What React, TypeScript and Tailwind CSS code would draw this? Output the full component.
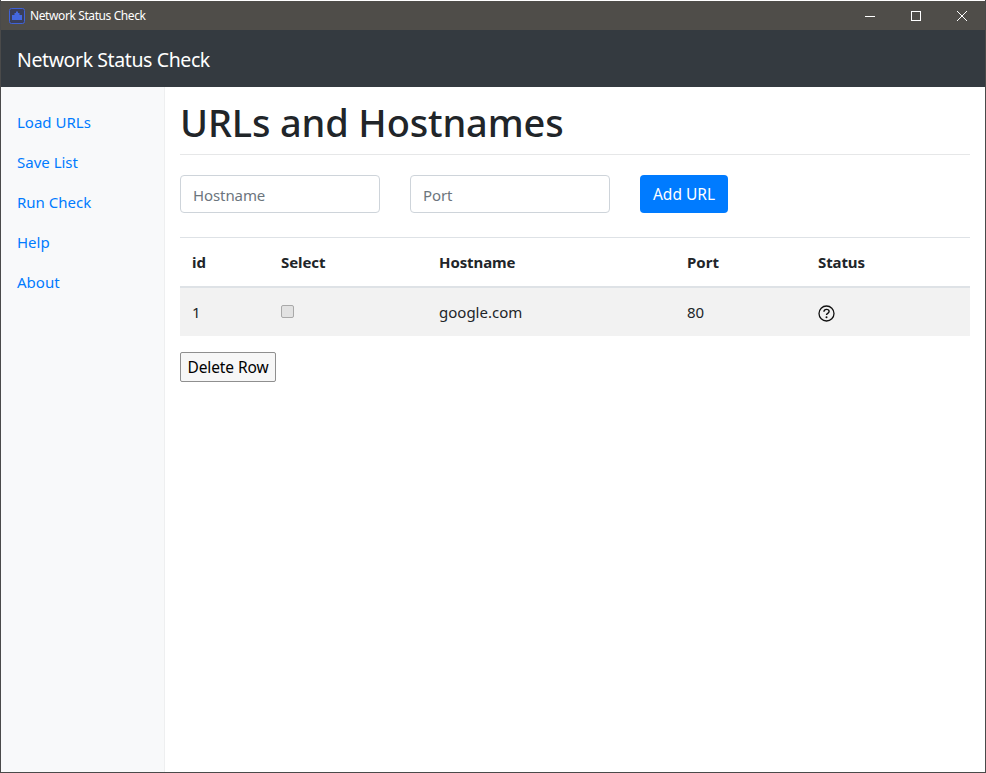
const font = { sans: 'font-["Noto_Sans",sans-serif]' }

const navItems = ['Load URLs', 'Save List', 'Run Check', 'Help', 'About']

function WindowIcon() {
  return (
    <svg width="16" height="16" viewBox="0 0 16 16" className="shrink-0">
      <rect x="0.5" y="0.5" width="15" height="15" rx="2" fill="#3a3f5a" stroke="#3f62d8" />
      <path d="M3 12V7h2.5V5H7V3.5h2V5h1.5v2H13v5z" fill="#4468e0" />
    </svg>
  )
}

function TitleBar() {
  return (
    <div className="flex h-[29px] shrink-0 items-center bg-[#4f4d49] pl-[8px] text-white">
      <WindowIcon />
      <span className="ml-[5px] text-[12px] tracking-[-0.4px]">Network Status Check</span>
      <div className="ml-auto flex items-center">
        <div className="flex h-[29px] w-[46px] items-center justify-center">
          <svg width="10" height="10" viewBox="0 0 10 10"><path d="M0 5.5h10" stroke="#fff" /></svg>
        </div>
        <div className="flex h-[29px] w-[46px] items-center justify-center">
          <svg width="10" height="10" viewBox="0 0 10 10"><rect x="0.5" y="0.5" width="9" height="9" fill="none" stroke="#fff" /></svg>
        </div>
        <div className="flex h-[29px] w-[46px] items-center justify-center">
          <svg width="10" height="10" viewBox="0 0 10 10"><path d="M0 0l10 10M10 0L0 10" stroke="#fff" /></svg>
        </div>
      </div>
    </div>
  )
}

export default function App() {
  return (
    <div className={`flex h-[773px] w-[986px] flex-col overflow-hidden border border-t-0 border-[#4a4a4a] bg-white pt-px text-[#212529] ${font.sans}`}>
      <TitleBar />
      <header className="flex h-[57px] shrink-0 items-center bg-[#343a40] pl-[16px] pt-[2px] text-[19.5px] tracking-[-0.4px] text-white">
        Network Status Check
      </header>
      <div className="flex min-h-0 flex-1">
        <aside className="flex w-[164px] shrink-0 flex-col border-r border-[#eeeff0] bg-[#f8f9fa] pl-[16px] pt-[15px] text-[15px] text-[#007bff]">
          {navItems.map(item => (
            <a key={item} className="flex h-[40px] items-center">{item}</a>
          ))}
        </aside>
        <main className="flex-1 px-[15px]">
          <h1 className="flex h-[68px] items-center border-b border-[#e6e7e8] pt-[4px] text-[38px] font-medium tracking-[-0.15px]">
            URLs and Hostnames
          </h1>
          <form className="mt-[20px] flex gap-[30px]">
            <input placeholder="Hostname" className="h-[38px] w-[200px] rounded border border-[#ced4da] px-[12px] pt-[2px] text-[15px] tracking-[-0.1px] placeholder:text-[#6c757d]" />
            <input placeholder="Port" className="h-[38px] w-[200px] rounded border border-[#ced4da] px-[12px] pt-[2px] text-[15px] tracking-[-0.1px] placeholder:text-[#6c757d]" />
            <button type="button" className="h-[38px] w-[88px] rounded bg-[#007bff] pt-[2px] text-[15.5px] text-white">Add URL</button>
          </form>
          <table className="mt-[24px] w-full border-collapse text-left text-[15px]">
            <thead>
              <tr className="h-[49px] border-t border-b-2 border-t-[#dee2e6] border-b-[#dee2e6]">
                <th className="w-[89px] pl-[12px] font-bold">id</th>
                <th className="w-[158px] pl-[12px] font-bold tracking-[-0.1px]">Select</th>
                <th className="w-[248px] pl-[12px] font-bold tracking-[-0.1px]">Hostname</th>
                <th className="w-[131px] pl-[12px] font-bold">Port</th>
                <th className="pl-[12px] font-bold tracking-[-0.1px]">Status</th>
              </tr>
            </thead>
            <tbody>
              <tr className="h-[49px] bg-[#f2f2f2]">
                <td className="pl-[12px] pt-[2px]">1</td>
                <td className="pl-[12px] pt-[2px]">
                  <input type="checkbox" className="block h-[13px] w-[13px] -translate-y-[1px] appearance-none rounded-[2px] border border-[#a9a9a9] bg-[#e2e2e2]" />
                </td>
                <td className="pl-[12px] pt-[2px]">google.com</td>
                <td className="pl-[12px] pt-[2px]">80</td>
                <td className="pl-[12px] pt-[2px]">
                  <svg width="17" height="17" viewBox="0 0 17 17" fill="none" stroke="#111" className="block translate-y-[1px]">
                    <circle cx="8.5" cy="8.5" r="7.5" strokeWidth="1.3" />
                    <path d="M5.9 6.7C6 5.2 7.1 4.4 8.5 4.4c1.5 0 2.6.9 2.6 2.1 0 1.9-2.6 1.8-2.6 3.6" strokeWidth="1.4" />
                    <circle cx="8.5" cy="12.3" r="1" fill="#111" stroke="none" />
                  </svg>
                </td>
              </tr>
            </tbody>
          </table>
          <button type="button" className="mt-[16px] h-[30px] w-[96px] rounded-[2px] border border-[#8f8f8f] bg-[#f7f7f7] pt-[2px] text-[15.5px] tracking-[-0.1px] text-black">
            Delete Row
          </button>
        </main>
      </div>
    </div>
  )
}
